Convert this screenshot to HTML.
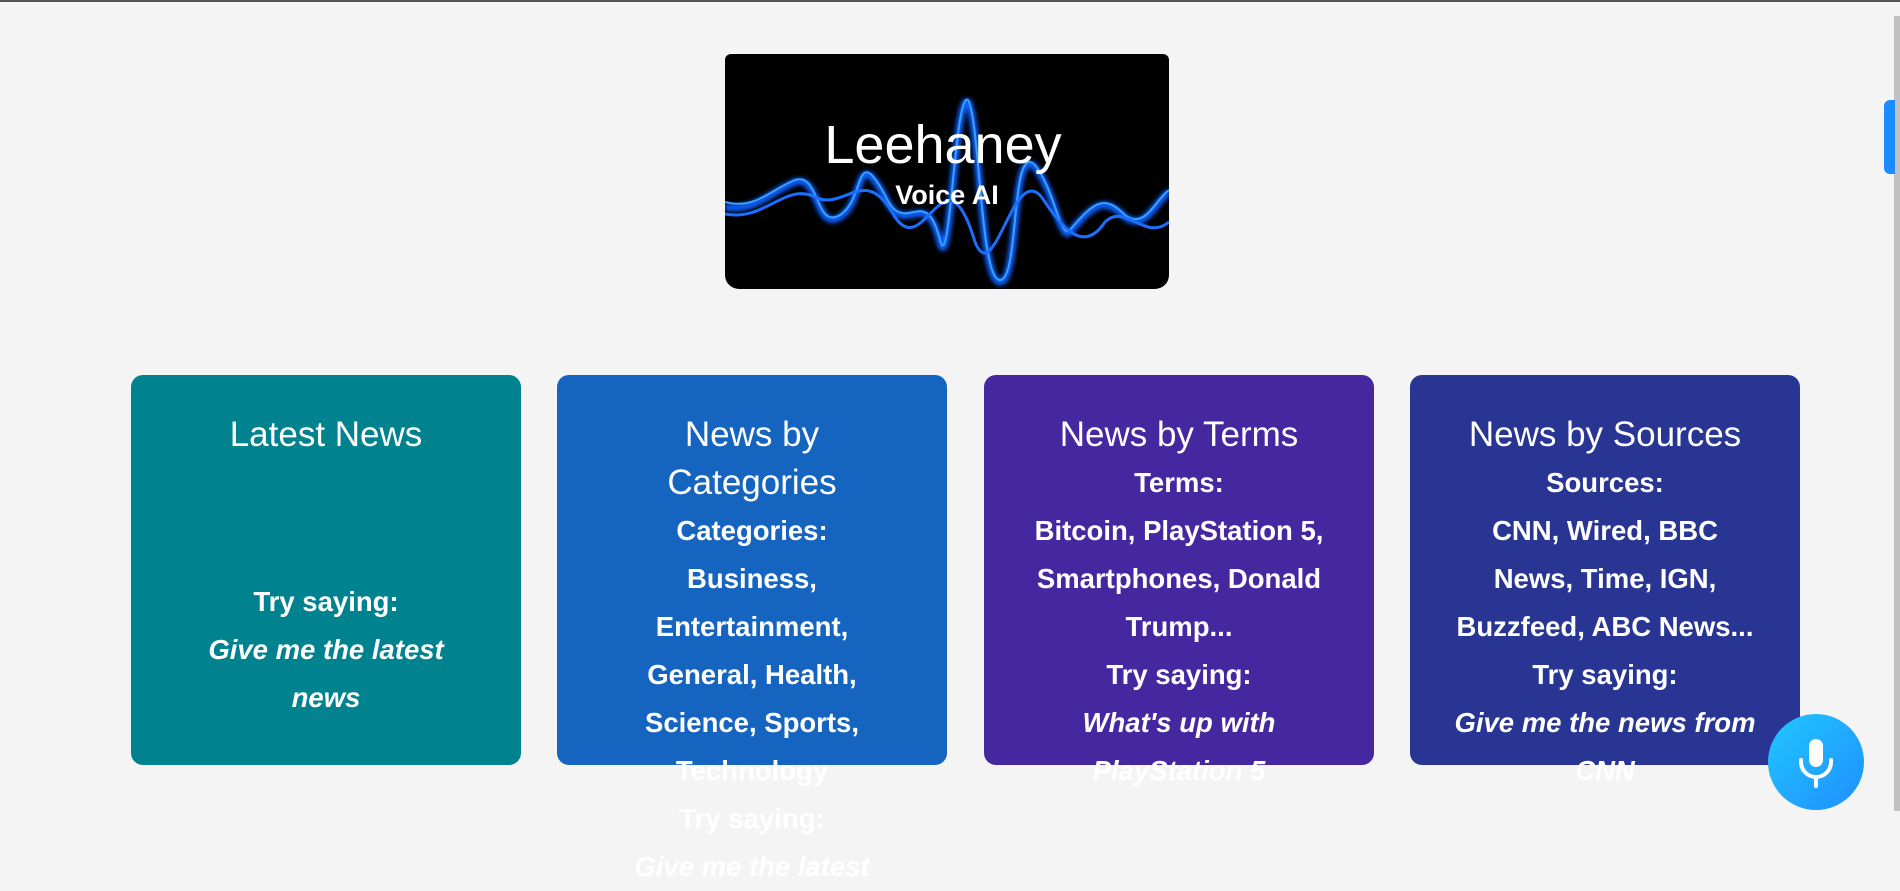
<!DOCTYPE html>
<html><head><meta charset="utf-8"><style>
html,body{margin:0;padding:0;}
body{width:1900px;height:862px;background:#f4f4f4;overflow:hidden;position:relative;font-family:"Liberation Sans",Arial,sans-serif;border-top:2px solid #555;box-sizing:border-box;}
.logo{position:absolute;left:725px;top:52px;width:444px;height:235px;background:#000;border-radius:6px 6px 14px 14px;overflow:hidden;}
.card{position:absolute;top:373px;width:390px;height:390px;border-radius:12px;color:#fff;text-align:center;box-sizing:border-box;padding:36px 10px 0;}
.card h2{margin:0;font-weight:400;font-size:35px;line-height:48px;}
.card p{margin:0;font-weight:700;font-size:27.5px;line-height:48px;}
.card i{font-style:italic;}
.mic{position:absolute;left:1768px;top:712px;width:96px;height:96px;border-radius:50%;background:linear-gradient(135deg,#22c6ff,#1e8fff);}
</style></head><body>
<div class="logo">
<svg width="444" height="235" viewBox="0 0 444 235">
<defs><filter id="g"><feGaussianBlur stdDeviation="2"/></filter></defs>
<g transform="translate(0,28)">
<g fill="none" stroke="#1060ff" stroke-width="7" filter="url(#g)">
<path d="M0 125 C30 130 45 110 70 100 C95 92 90 150 115 135 C140 120 130 60 160 115 C180 160 200 100 215 160 C225 200 230 10 243 20 C255 40 255 200 275 200 C295 200 285 60 310 85 C330 110 335 160 345 150 C370 120 380 115 400 135 C420 150 430 120 444 110"/>
</g>
<g fill="none" stroke="#3aa0ff" stroke-width="2">
<path d="M0 120 C30 128 45 108 70 98 C95 90 90 148 115 133 C140 118 130 58 160 113 C180 158 200 98 215 158 C225 198 230 8 243 18 C255 38 255 198 275 198 C295 198 285 58 310 83 C330 108 335 158 345 148 C370 118 380 113 400 133 C420 148 430 118 444 108"/>
<path d="M0 132 C40 140 60 100 90 115 C120 130 140 80 170 135 C200 180 220 60 250 160 C270 210 290 70 320 120 C340 150 360 170 380 140 C400 120 420 160 444 140" stroke="#1a6fff" stroke-width="3"/>
</g>
</g>
<text x="218" y="109" text-anchor="middle" fill="#fff" font-family="Liberation Sans, sans-serif" font-size="54">Leehaney</text>
<text x="222" y="150" text-anchor="middle" fill="#fff" font-family="Liberation Sans, sans-serif" font-size="27" font-weight="700">Voice AI</text>
</svg>
</div>

<div class="card" style="left:131px;background:#00838f;">
<h2>Latest News</h2>
<p style="margin-top:119px">Try saying:</p>
<p><i>Give me the latest<br>news</i></p>
</div>
<div class="card" style="left:557px;background:#1565c0;">
<h2>News by<br>Categories</h2>
<p>Categories:</p>
<p style="font-weight:700">Business,<br>Entertainment,<br>General, Health,<br>Science, Sports,<br>Technology</p>
<p>Try saying:</p>
<p><i>Give me the latest</i></p>
</div>
<div class="card" style="left:984px;background:#4527a0;">
<h2>News by Terms</h2>
<p>Terms:</p>
<p>Bitcoin, PlayStation 5,<br>Smartphones, Donald<br>Trump...</p>
<p>Try saying:</p>
<p><i>What's up with<br>PlayStation 5</i></p>
</div>
<div class="card" style="left:1410px;background:#283593;">
<h2>News by Sources</h2>
<p>Sources:</p>
<p>CNN, Wired, BBC<br>News, Time, IGN,<br>Buzzfeed, ABC News...</p>
<p>Try saying:</p>
<p><i>Give me the news from<br>CNN</i></p>
</div>

<div style="position:absolute;left:1894px;top:14px;width:6px;height:795px;background:#c1c1c1;"></div>
<div style="position:absolute;left:1884px;top:98px;width:11px;height:74px;background:#1a8cff;border-radius:6px 0 0 6px;"></div>

<div class="mic">
<svg width="96" height="96" viewBox="0 0 96 96">
<rect x="41" y="25" width="14" height="28" rx="7" fill="#fff"/>
<path d="M33 46 v2 a15 15 0 0 0 30 0 v-2" fill="none" stroke="#fff" stroke-width="4" stroke-linecap="round"/>
<line x1="48" y1="63" x2="48" y2="72" stroke="#fff" stroke-width="4" stroke-linecap="round"/>
</svg>
</div>
</body></html>
